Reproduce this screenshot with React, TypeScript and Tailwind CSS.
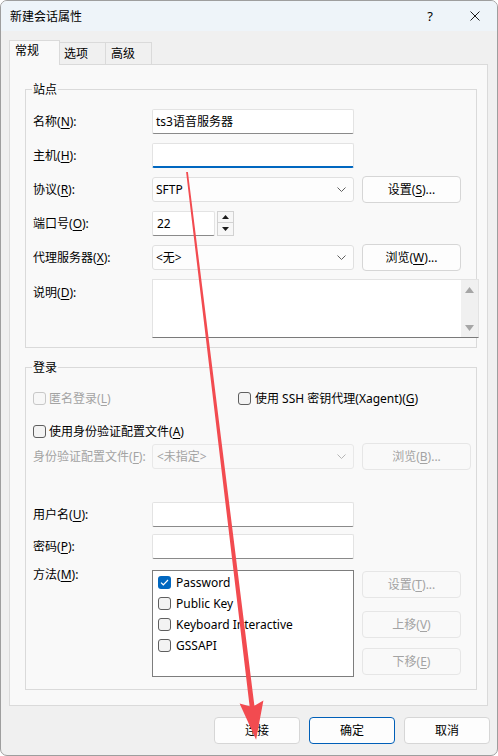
import React from "react";

function Acc({ k }: { k: string }) {
  return (
    <>
      (<span className="underline decoration-1 underline-offset-[2px]">{k}</span>)
    </>
  );
}

function Chevron({ dim }: { dim?: boolean }) {
  return (
    <svg width="9" height="5" viewBox="0 0 9 5" className="shrink-0">
      <path d="M0.5 0.5 L4.5 4.5 L8.5 0.5" fill="none" stroke={dim ? "#b5b5b5" : "#606060"} strokeWidth="1" />
    </svg>
  );
}

function Check({ checked, disabled }: { checked?: boolean; disabled?: boolean }) {
  if (checked) {
    return (
      <span className="w-[13px] h-[13px] shrink-0 rounded-[3px] bg-[#0067c0] flex items-center justify-center">
        <svg width="9" height="7" viewBox="0 0 9 7">
          <path d="M1 3.6 L3.3 5.8 L8 1" fill="none" stroke="#ffffff" strokeWidth="1.2" />
        </svg>
      </span>
    );
  }
  return (
    <span
      className={
        disabled
          ? "w-[13px] h-[13px] shrink-0 rounded-[3px] border border-[#c8c8c8] bg-[#f7f7f7]"
          : "w-[13px] h-[13px] shrink-0 rounded-[3px] border border-[#5f5f5f] bg-[#f3f3f3]"
      }
    />
  );
}

function TextBox({ value, focused }: { value?: string; focused?: boolean }) {
  return (
    <div
      className={
        focused
          ? "w-[202px] h-[25px] bg-white border border-[#e3e3e3] border-b-2 border-b-[#0067c0] rounded-[2px] pl-[3px] flex items-center"
          : "w-[202px] h-[25px] bg-white border border-[#e3e3e3] border-b-[#8a8a8a] rounded-[2px] pl-[3px] flex items-center"
      }
    >
      {value}
    </div>
  );
}

function Select({ value, disabled }: { value: string; disabled?: boolean }) {
  return (
    <div
      className={
        disabled
          ? "w-[202px] h-[25px] bg-[#f9f9f9] border border-[#e8e8e8] rounded-[3px] pl-[4px] pr-[7px] flex items-center justify-between text-[#a3a3a3]"
          : "w-[202px] h-[25px] bg-[#fdfdfd] border border-[#e0e0e0] rounded-[3px] pl-[3px] pr-[7px] flex items-center justify-between"
      }
    >
      <span>{value}</span>
      <Chevron dim={disabled} />
    </div>
  );
}

function Btn({
  children,
  disabled,
  wide,
}: {
  children: React.ReactNode;
  disabled?: boolean;
  wide?: boolean;
}) {
  const w = wide ? "w-[109px]" : "w-[99px]";
  return (
    <div
      className={
        disabled
          ? `${w} h-[27px] shrink-0 rounded-[4px] border border-[#e6e6e6] bg-[#f9f9f9] text-[#a3a3a3] flex items-center justify-center`
          : `${w} h-[27px] shrink-0 rounded-[4px] border border-[#d6d6d6] bg-[#fdfdfd] flex items-center justify-center`
      }
    >
      {children}
    </div>
  );
}

function Row({ label, children }: { label: React.ReactNode; children: React.ReactNode }) {
  return (
    <div className="h-[25px] flex items-center">
      <div className="w-[119px] shrink-0">{label}</div>
      {children}
    </div>
  );
}

function Group({
  title,
  className,
  children,
}: {
  title: string;
  className: string;
  children: React.ReactNode;
}) {
  return (
    <div className={`relative w-[452px] border border-[#dadada] pl-[7px] ${className}`}>
      <span className="absolute left-[6px] -top-[9px] px-[1px] bg-[#f9f9f9] leading-[17px]">{title}</span>
      {children}
    </div>
  );
}

function ArrowOverlay() {
  return (
    <svg
      className="absolute left-[-1px] top-[-1px] pointer-events-none"
      width="498"
      height="756"
      viewBox="0 0 498 756"
    >
      <polygon
        points="186.1,172.1 249.6,706.3 239.6,703.4 256.1,739.8 263.4,700.6 254.4,705.7 187.9,171.9"
        fill="#f24b50"
      />
    </svg>
  );
}

export default function App() {
  return (
    <div className="w-[498px] h-[756px] bg-white text-[12px] leading-[17px] text-black font-['Noto_Sans','Noto_Sans_CJK_SC',sans-serif]">
      <div className="relative w-[498px] h-[756px] rounded-[7px] border border-[#9e9e9e] bg-[#f0f0f0] overflow-hidden flex flex-col">
        {/* title bar */}
        <div className="h-[30px] shrink-0 bg-[#eef4f9] flex items-center pl-[9px] pr-[17px]">
          <span className="flex-1">新建会话属性</span>
          <span className="w-[8px] text-center text-[13px] mr-[36px]">?</span>
          <svg width="10" height="10" viewBox="0 0 10 10">
            <path d="M0.5 0.5 L9.5 9.5 M9.5 0.5 L0.5 9.5" stroke="#1b1b1b" strokeWidth="1" />
          </svg>
        </div>

        <div className="flex-1 flex flex-col pl-[8px] pt-[9px]">
          {/* tabs */}
          <div className="relative z-10 h-[25px] -mb-px flex items-end">
            <div className="w-[51px] h-[25px] bg-[#f9f9f9] border border-b-0 border-[#dadada] pl-[5px] pt-[1px]">
              常规
            </div>
            <div className="w-[46px] h-[23px] bg-[#f0f0f0] border-t border-r border-b border-[#dadada] pl-[4px] pt-[2px]">
              选项
            </div>
            <div className="w-[46px] h-[23px] bg-[#f0f0f0] border-t border-r border-b border-[#dadada] pl-[5px] pt-[2px]">
              高级
            </div>
          </div>

          {/* tab page */}
          <div className="w-[479px] h-[642px] border border-[#dadada] bg-[#f9f9f9] pl-[15px]">
            <Group title="站点" className="mt-[24px] pt-[19px] pb-[9px]">
              <div className="flex flex-col gap-[9px]">
                <Row label={<>名称<Acc k="N" />:</>}>
                  <TextBox value="ts3语音服务器" />
                </Row>
                <Row label={<>主机<Acc k="H" />:</>}>
                  <TextBox focused />
                </Row>
                <Row label={<>协议<Acc k="R" />:</>}>
                  <Select value="SFTP" />
                  <div className="ml-[8px]">
                    <Btn>
                      设置<Acc k="S" />...
                    </Btn>
                  </div>
                </Row>
                <Row label={<>端口号<Acc k="O" />:</>}>
                  <div className="w-[63px] h-[25px] bg-white border border-[#e3e3e3] border-b-[#8a8a8a] rounded-[2px] pl-[4px] flex items-center">
                    22
                  </div>
                  <div className="ml-[2px] w-[17px] h-[25px] flex flex-col">
                    <div className="h-[12px] border border-[#d2d2d2] bg-[#f7f7f7] flex items-center justify-center">
                      <svg width="7" height="4" viewBox="0 0 7 4">
                        <polygon points="0,4 3.5,0 7,4" fill="#1b1b1b" />
                      </svg>
                    </div>
                    <div className="h-[13px] border border-t-0 border-[#d2d2d2] bg-[#f7f7f7] flex items-center justify-center">
                      <svg width="7" height="4" viewBox="0 0 7 4">
                        <polygon points="0,0 7,0 3.5,4" fill="#1b1b1b" />
                      </svg>
                    </div>
                  </div>
                </Row>
                <Row label={<>代理服务器<Acc k="X" />:</>}>
                  <Select value="<无>" />
                  <div className="ml-[8px]">
                    <Btn>
                      浏览<Acc k="W" />...
                    </Btn>
                  </div>
                </Row>
                <div className="h-[59px] flex items-start">
                  <div className="w-[119px] shrink-0 pt-[5px]">
                    说明<Acc k="D" />:
                  </div>
                  <div className="w-[327px] h-[59px] shrink-0 bg-white border border-[#e3e3e3] border-b-[#7a7a7a] flex justify-end">
                    <div className="w-[17px] h-full bg-[#f0f0f0] flex flex-col items-center justify-between pt-[7px] pb-[6px]">
                      <svg width="9" height="6" viewBox="0 0 9 6">
                        <polygon points="0,6 4.5,0 9,6" fill="#a6a6a6" />
                      </svg>
                      <svg width="9" height="6" viewBox="0 0 9 6">
                        <polygon points="0,0 9,0 4.5,6" fill="#a6a6a6" />
                      </svg>
                    </div>
                  </div>
                </div>
              </div>
            </Group>

            <Group title="登录" className="mt-[19px] pt-[22px] pb-[12px]">
              <div className="h-[17px] flex items-center">
                <div className="w-[205px] flex items-center gap-[3px] text-[#a3a3a3]">
                  <Check disabled />
                  <span>
                    匿名登录<Acc k="L" />
                  </span>
                </div>
                <div className="flex items-center gap-[4px]">
                  <Check />
                  <span>
                    使用 SSH 密钥代理(Xagent)<Acc k="G" />
                  </span>
                </div>
              </div>
              <div className="mt-[16px] h-[17px] flex items-center gap-[3px]">
                <Check />
                <span>
                  使用身份验证配置文件<Acc k="A" />
                </span>
              </div>
              <div className="mt-[4px]">
                <Row label={<span className="text-[#a3a3a3]">身份验证配置文件<Acc k="F" />:</span>}>
                  <Select value="<未指定>" disabled />
                  <div className="ml-[8px]">
                    <Btn disabled wide>
                      浏览<Acc k="B" />...
                    </Btn>
                  </div>
                </Row>
              </div>
              <div className="mt-[33px]">
                <Row label={<>用户名<Acc k="U" />:</>}>
                  <TextBox />
                </Row>
              </div>
              <div className="mt-[7px]">
                <Row label={<>密码<Acc k="P" />:</>}>
                  <TextBox />
                </Row>
              </div>
              <div className="mt-[11px] flex items-start">
                <div className="w-[119px] shrink-0 -mt-[4px]">
                  方法<Acc k="M" />:
                </div>
                <div className="w-[202px] h-[107px] shrink-0 bg-white border border-[#7d7d7d] pt-[1px] pl-[5px]">
                  {[
                    ["Password", true],
                    ["Public Key", false],
                    ["Keyboard Interactive", false],
                    ["GSSAPI", false],
                  ].map(([name, on]) => (
                    <div key={name as string} className="h-[21px] flex items-center gap-[5px]">
                      <Check checked={on as boolean} />
                      <span>{name as string}</span>
                    </div>
                  ))}
                </div>
                <div className="ml-[8px] flex flex-col">
                  <div className="mt-[1px]">
                    <Btn disabled>
                      设置<Acc k="T" />...
                    </Btn>
                  </div>
                  <div className="mt-[13px]">
                    <Btn disabled>
                      上移<Acc k="V" />
                    </Btn>
                  </div>
                  <div className="mt-[10px]">
                    <Btn disabled>
                      下移<Acc k="E" />
                    </Btn>
                  </div>
                </div>
              </div>
            </Group>
          </div>

          {/* dialog buttons */}
          <div className="mt-[11px] pr-[7px] flex justify-end gap-[9px]">
            <div className="w-[86px] h-[27px] rounded-[4px] border border-[#d6d6d6] bg-[#fdfdfd] flex items-center justify-center">
              连接
            </div>
            <div className="w-[86px] h-[27px] rounded-[4px] border border-[#005fb8] bg-[#fdfdfd] flex items-center justify-center">
              确定
            </div>
            <div className="w-[86px] h-[27px] rounded-[4px] border border-[#d6d6d6] bg-[#fdfdfd] flex items-center justify-center">
              取消
            </div>
          </div>
        </div>

        <ArrowOverlay />
      </div>
    </div>
  );
}
